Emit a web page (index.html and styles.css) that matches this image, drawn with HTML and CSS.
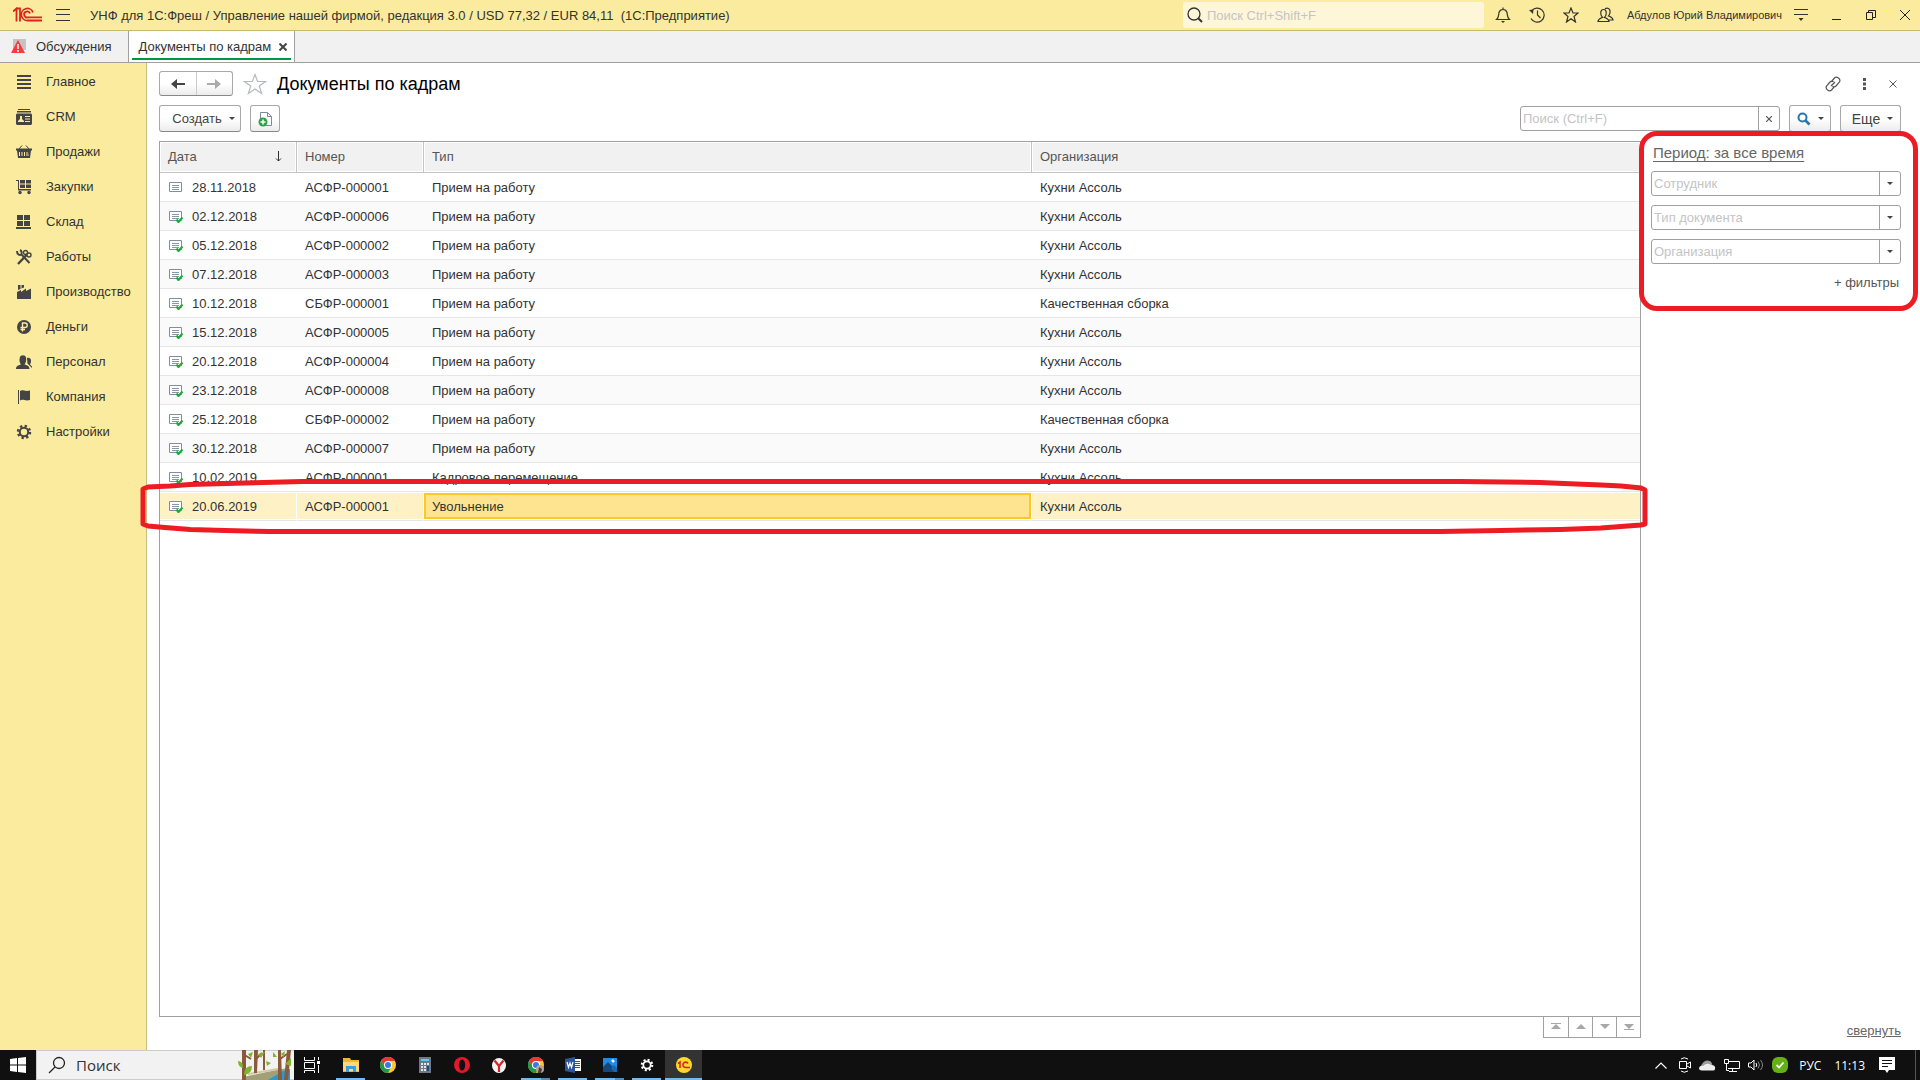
FILE: index.html
```html
<!DOCTYPE html>
<html lang="ru">
<head>
    <meta charset="UTF-8">
    <meta name="viewport" content="width=device-width, initial-scale=1.0">
    <title>Документы по кадрам</title>
    <link rel="stylesheet" href="styles.css">
</head>
<body>
    <header class="titlebar">
        <svg class="logo" viewBox="0 0 30 16" width="30" height="16" fill="none" stroke="#d9261c">
            <path d="M0 4.500L3.500 1.500V14.500M4 1.500H7V14.500" stroke-width="1.800"/>
            <path d="M20 5.500A6 6 0 1 0 15 13.500H29" stroke-width="1.800"/>
            <path d="M17 6.500A3 3 0 1 0 15 10.300H29" stroke-width="1.800"/>
        </svg>
        <button class="icon-btn menu-btn" aria-label="Меню">
            <svg width="14" height="12" viewBox="0 0 14 12" stroke="#333"><path d="M0 .5H14M0 5.500H14M0 11.500H14"/></svg>
        </button>
        <span class="app-title">УНФ для 1С:Фреш / Управление нашей фирмой, редакция 3.0 / USD 77,32 / EUR 84,11&nbsp; (1С:Предприятие)</span>
        <label class="global-search">
            <svg width="16" height="16" viewBox="0 0 16 16" fill="none" stroke="#333"><circle cx="7" cy="7" r="6" stroke-width="1.300"/><path d="M11.500 11.500L15 15" stroke-width="2"/></svg>
            <input type="text" placeholder="Поиск Ctrl+Shift+F" aria-label="Поиск">
        </label>
        <div class="title-icons">
            <button class="icon-btn" aria-label="Уведомления">
                <svg width="16" height="16" viewBox="0 0 16 16" fill="none" stroke="#333" stroke-width="1.200"><path d="M1.500 12.500C4 10.500 3.500 8 4 5.500C4.500 3.500 6 2.500 8 2.500S11.500 3.500 12 5.500C12.500 8 12 10.500 14.500 12.500ZM8 .5V2.500"/><path d="M6 14H10L8 16Z" fill="#333" stroke="none"/></svg>
            </button>
            <button class="icon-btn" aria-label="История">
                <svg width="16" height="16" viewBox="0 0 16 16" fill="none" stroke="#333" stroke-width="1.200"><path d="M2.500 4A7 7 0 1 1 2 11.500M8.500 3.500V8L11.500 11"/><path d="M0 3L4.500 2.500L4 7Z" fill="#333" stroke="none"/></svg>
            </button>
            <button class="icon-btn" aria-label="Избранное">
                <svg width="16" height="16" viewBox="0 0 16 16" fill="none" stroke="#333" stroke-width="1.200"><path d="M8 1L10 6H15L11 9.500L12.500 15L8 11.800L3.500 15L5 9.500L1 6H6Z"/></svg>
            </button>
            <button class="icon-btn" aria-label="Пользователь">
                <svg width="17" height="16" viewBox="0 0 17 16" fill="none" stroke="#333" stroke-width="1.200"><path d="M1 14.500C1 12 3 11.500 5.500 10.500C2.500 7 3.500 2.500 6.500 2.500S10.500 7 7.500 10.500C10 11.500 12 12 12 14.500Z"/><path d="M8 2C10 0 13.500 1.500 13 5C13 7 12.500 8 11.500 9C14 10 16 10.500 16 13H12"/></svg>
            </button>
        </div>
        <a class="user-name" href="#">Абдулов Юрий Владимирович</a>
        <div class="window-icons">
            <button class="icon-btn" aria-label="Параметры">
                <svg width="14" height="14" viewBox="0 0 14 14" stroke="#333"><path d="M0 1.500H14M0 6.500H14"/><path d="M4.500 10H9.500L7 13Z" fill="#333" stroke="none"/></svg>
            </button>
            <button class="icon-btn" aria-label="Свернуть окно">
                <svg width="10" height="10" viewBox="0 0 10 10" stroke="#222"><path d="M0 9.500H9"/></svg>
            </button>
            <button class="icon-btn" aria-label="Восстановить">
                <svg width="10" height="10" viewBox="0 0 10 10" fill="none" stroke="#222"><path d="M.5 2.500H6.500V9.500H.5ZM2.500 2.500V.5H9.500V7.500H6.500"/></svg>
            </button>
            <button class="icon-btn" aria-label="Закрыть окно">
                <svg width="10" height="10" viewBox="0 0 10 10" stroke="#222"><path d="M0 0L10 10M10 0L0 10"/></svg>
            </button>
        </div>
    </header>

    <nav class="tabs">
        <a class="tab" href="#">
            <svg width="17" height="16" viewBox="0 0 17 16"><path d="M3 0H16V11H12L10 15V11H3Z" fill="#c4c4c4"/><path d="M8 1L15 14H1Z" fill="#fb3b3b"/><path d="M8 5V10M8 11V13" stroke="#fff" stroke-width="1.500"/></svg>
            <span>Обсуждения</span>
        </a>
        <div class="tab active">
            <span>Документы по кадрам</span>
            <button class="icon-btn" aria-label="Закрыть вкладку">
                <svg width="8" height="8" viewBox="0 0 8 8" stroke="#444" stroke-width="2"><path d="M.5 .5L7.500 7.500M7.500 .5L.5 7.500"/></svg>
            </button>
        </div>
    </nav>

    <div class="workspace">
        <nav class="sidebar">
            <a href="#"><svg viewBox="0 0 16 16"><path d="M1 1H15V3H1ZM1 5H15V7H1ZM1 9H15V11H1ZM1 13H15V15H1Z"/></svg>Главное</a>
            <a href="#"><svg viewBox="0 0 16 16"><path d="M2 0H14V1H2ZM1 2H15V3.500H1Z"/><path fill-rule="evenodd" d="M1 4.500H15L16 5.500V15L15 16H1L0 15V5.500ZM4 7V10L2 12V13H8V12L6 10V7ZM9 7V8H14V7ZM9 9.500V10.500H14V9.500ZM9 12V13H14V12Z"/></svg>CRM</a>
            <a href="#"><svg viewBox="0 0 16 16"><path d="M3 5L6 1.500M13 5L10 1.500" stroke="#444"/><path fill-rule="evenodd" d="M0 4.500H16V6.500H15L14 14H2L1 6.500H0ZM3 8V12H4V8ZM5.500 8V12H6.500V8ZM8 8V12H9V8ZM10.500 8V12H11.500V8ZM13 8L12.500 12H13Z"/></svg>Продажи</a>
            <a href="#"><svg viewBox="0 0 16 16"><path d="M0 1H3V10H15V11.500H2V2H0ZM4 1H9V4.500H4ZM10 1H15V4.500H10ZM4 5.500H9V9H4ZM10 5.500H15V9H10Z"/><circle cx="4" cy="13.500" r="1.700"/><circle cx="13" cy="13.500" r="1.700"/></svg>Закупки</a>
            <a href="#"><svg viewBox="0 0 16 16"><path d="M1 1H7V6H1ZM8 1H14V6H8ZM1 7H7V12H1ZM8 7H14V12H8ZM0 13H15V15H0Z"/></svg>Склад</a>
            <a href="#"><svg viewBox="0 0 16 16" fill="none" stroke="#444"><path d="M1 2C1 6 4 6.500 5.500 5.500L13.500 14M4 1C6 2 6 4 5 5" stroke-width="2"/><path d="M2 15L10.500 6" stroke-width="2.400"/><circle cx="9.500" cy="3.500" r="2" stroke-width="1.400"/><circle cx="13" cy="6" r="2" stroke-width="1.400"/></svg>Работы</a>
            <a href="#"><svg viewBox="0 0 16 16"><path d="M1 15V8L5 6V8L10 4.500V7L15 4.500V15ZM2 1H4.500V5L2 6ZM5.500 1H8V3.500L5.500 4.500Z"/></svg>Производство</a>
            <a href="#"><svg viewBox="0 0 16 16"><circle cx="8" cy="8" r="7"/><path d="M6.500 12.500V4H9C12 4 12 8.500 9 8.500H4.500M4.500 10.500H9" fill="none" stroke="#fbeb9e" stroke-width="1.400"/></svg>Деньги</a>
            <a href="#"><svg viewBox="0 0 16 16"><path d="M0 15C0 12 2 11.500 5 10.500C3 8 3.500 5 3.800 3.500C4.500 .5 9.500 .5 10 3.500C10.500 6 10 8.500 8.500 10.500C11.500 11.500 13.500 12 13.500 15ZM11 4C13 3 15.500 4.500 15 7C15 8.500 14.500 9.500 14 10.500L16 12.500V14L11.500 9.500Z"/></svg>Персонал</a>
            <a href="#"><svg viewBox="0 0 16 16"><path d="M2 1H3V15H2ZM4 2C7 0 8 3 14 1.500V11C9 12.500 7 9.500 4 11.500Z"/></svg>Компания</a>
            <a href="#"><svg viewBox="0 0 16 16" fill="none" stroke="#444"><circle cx="8" cy="8" r="4.200" stroke-width="2"/><circle cx="8" cy="8" r="6" stroke-width="2.400" stroke-dasharray="2.350 2.350"/></svg>Настройки</a>
        </nav>

        <main class="content">
            <div class="form-head">
                <div class="history">
                    <button aria-label="Назад"><svg width="15" height="10" viewBox="0 0 15 10" fill="#444"><path d="M0 5L6 0V4H14V6H6V10Z"/></svg></button>
                    <button aria-label="Вперед"><svg width="15" height="10" viewBox="0 0 15 10" fill="#aaa"><path d="M14 5L8 0V4H0V6H8V10Z"/></svg></button>
                </div>
                <button class="icon-btn" aria-label="В избранное">
                    <svg width="24" height="22" viewBox="0 0 24 22" fill="none" stroke="#b4bac0" stroke-width="1.200"><path d="M12 1.500L14.600 8.500H22.500L16.300 13L18.600 20.500L12 16L5.400 20.500L7.700 13L1.500 8.500H9.400Z"/></svg>
                </button>
                <h1>Документы по кадрам</h1>
                <div class="form-tools">
                    <button class="icon-btn" aria-label="Ссылка">
                        <svg width="16" height="16" viewBox="0 0 16 16" fill="none" stroke="#555" stroke-width="1.200"><path d="M6.500 5.500L9.500 2C11.500 -.2 16.500 3 14.300 6.200L11 10C10 11 8.500 11 7.500 10.200M9.500 10.500L6.500 14C4.500 16.200 -.5 13 1.700 9.800L5 6C6 5 7.500 5 8.500 5.800M6 10L10 6"/></svg>
                    </button>
                    <button class="icon-btn" aria-label="Дополнительно">
                        <svg width="8" height="12" viewBox="0 0 8 12" fill="#555"><path d="M2 0H5V3H2ZM2 4.500H5V7.500H2ZM2 9H5V12H2Z"/></svg>
                    </button>
                    <button class="icon-btn" aria-label="Закрыть">
                        <svg width="8" height="8" viewBox="0 0 8 8" stroke="#555"><path d="M.5 .5L7.500 7.500M7.500 .5L.5 7.500"/></svg>
                    </button>
                </div>
            </div>

            <div class="toolbar">
                <button class="btn create">Создать <i class="caret"></i></button>
                <button class="btn copy" aria-label="Создать копированием">
                    <svg width="15" height="16" viewBox="0 0 15 16"><path d="M2.500 8V1.500H9.500L13.500 5.500V14.500H8" fill="#fff" stroke="#7a8b9e"/><path d="M9.500 1.500V5.500H13.500" fill="none" stroke="#7a8b9e"/><circle cx="5" cy="11" r="4.500" fill="#2aa346"/><path d="M5 8.500V13.500M2.500 11H7.500" stroke="#fff" stroke-width="1.500"/></svg>
                </button>
                <div class="field search-field">
                    <input type="text" placeholder="Поиск (Ctrl+F)" aria-label="Поиск в списке">
                    <button aria-label="Очистить"><svg width="6" height="6" viewBox="0 0 6 6" stroke="#555" stroke-width="1.200"><path d="M0 0L6 6M6 0L0 6"/></svg></button>
                </div>
                <button class="btn find" aria-label="Найти">
                    <svg width="14" height="14" viewBox="0 0 14 14" fill="none" stroke="#2b76b0"><circle cx="5.500" cy="5.500" r="4" stroke-width="2"/><path d="M8.500 8.500L12.500 12.500" stroke-width="2.600"/></svg>
                    <i class="caret"></i>
                </button>
                <button class="btn more">Еще <i class="caret"></i></button>
            </div>

            <div class="body">
                <section class="list">
                    <div class="grid">
                        <table>
                            <colgroup>
                                <col class="col-date">
                                <col class="col-number">
                                <col class="col-type">
                                <col>
                            </colgroup>
                            <thead>
                                <tr>
                                    <th><span class="sorted">Дата <svg width="7" height="11" viewBox="0 0 7 11" fill="none" stroke="#333"><path d="M3.500 0V10M1 7.500L3.500 10L6 7.500"/></svg></span></th>
                                    <th>Номер</th>
                                    <th>Тип</th>
                                    <th>Организация</th>
                                </tr>
                            </thead>
                            <tbody id="rows"></tbody>
                        </table>
                    </div>
                    <div class="pager">
                        <button aria-label="В начало"><svg width="10" height="8" viewBox="0 0 10 8"><path d="M0 0H10V1H0ZM5 1L10 6H0Z"/></svg></button>
                        <button aria-label="Вверх"><svg width="10" height="8" viewBox="0 0 10 8"><path d="M5 1L10 6H0Z"/></svg></button>
                        <button aria-label="Вниз"><svg width="10" height="8" viewBox="0 0 10 8"><path d="M5 6L10 1H0Z"/></svg></button>
                        <button aria-label="В конец"><svg width="10" height="8" viewBox="0 0 10 8"><path d="M5 6L10 1H0ZM0 6H10V7H0Z"/></svg></button>
                    </div>
                    <svg class="row-mark" viewBox="0 0 1508 56" preserveAspectRatio="none">
                        <path vector-effect="non-scaling-stroke" d="M4 10L9 8L31 7L51 5.500L106 4L163 2.500H1320L1400 3.500L1436 5L1461 6L1481 7L1501 9L1505 11V45L1501 46L1461 49L1421 50.500L1361 51.500L1301 52.500H131L86 51.500L51 50.500L26 48.500L9 47L4 45Z"/>
                    </svg>
                </section>

                <aside class="filters">
                    <a class="period" href="#">Период: за все время</a>
                    <div class="field">
                        <input type="text" placeholder="Сотрудник" aria-label="Сотрудник">
                        <button aria-label="Выбрать сотрудника"><i class="caret"></i></button>
                    </div>
                    <div class="field">
                        <input type="text" placeholder="Тип документа" aria-label="Тип документа">
                        <button aria-label="Выбрать тип документа"><i class="caret"></i></button>
                    </div>
                    <div class="field">
                        <input type="text" placeholder="Организация" aria-label="Организация">
                        <button aria-label="Выбрать организацию"><i class="caret"></i></button>
                    </div>
                    <a class="add-filter" href="#">+ фильтры</a>
                    <a class="collapse" href="#">свернуть</a>
                    <div class="mark"></div>
                </aside>
            </div>
        </main>
    </div>

    <footer class="taskbar">
        <button class="start" aria-label="Пуск"><svg width="16" height="16" viewBox="0 0 16 16" fill="#fff"><path d="M0 2L7 1V7.500H0ZM8 1L16 0V7.500H8ZM0 8.500H7V15L0 14ZM8 8.500H16V16L8 15Z"/></svg></button>
        <label class="task-search">
            <svg width="18" height="18" viewBox="0 0 18 18" fill="none" stroke="#222" stroke-width="1.300"><circle cx="11" cy="7" r="5.500"/><path d="M7 11L1 17"/></svg>
            <input type="text" placeholder="Поиск" aria-label="Поиск Windows">
            <svg class="forest" width="56" height="30" viewBox="0 0 56 30">
                <path d="M26 30L42 21L52 19V30Z" fill="#279bd0"/>
                <path d="M5 27L38 20L50 18L30 30H5Z" fill="#a3a078"/>
                <path d="M10 24L40 19" stroke="#d0c9a5" stroke-width="2"/>
                <path d="M4 0H8V30H4ZM16 0H20L19 23H16ZM25 0H27V20H25ZM40 0H43L44 30H40ZM49 0H53L50 30H46Z" fill="#8a5a3b"/>
                <path d="M18 9L24 3M5 4L13 9M42 9L49 4" stroke="#8a5a3b" stroke-width="2"/>
                <path d="M0 11Q5 11 5 18Q0 17 0 11ZM6 25Q6 16 14 16Q14 24 6 25ZM10 4L15 2L13 8ZM20 4L27 2L23 8ZM28 11L33 13L29 16ZM35 2L39 7L35 7ZM47 14L53 8V16ZM43 4L47 1L46 7Z" fill="#7fb52b"/>
            </svg>
        </label>
        <div class="apps">
            <button class="app task-view" aria-label="Представление задач"><svg width="16" height="16" viewBox="0 0 16 16" fill="none" stroke="#fff"><path d="M.5 0V3.500H10.500V0M.5 5.500H10.500V11.500H.5ZM.5 16V13.500H10.500V16M14.500 0V3M14.500 8V16"/><path d="M13 4H16V7H13Z" fill="#fff" stroke="none"/></svg></button>
            <button class="app open" aria-label="Проводник"><svg width="16" height="14" viewBox="0 0 16 14"><path d="M0 0H7L8 2H16V14H0Z" fill="#f2b52e"/><path d="M0 4H16V13H0Z" fill="#ffd977"/><path d="M3 14V8H13V14H10V11H6V14Z" fill="#3f9be0"/></svg></button>
            <button class="app" aria-label="Chrome"><svg width="16" height="16" viewBox="0 0 16 16"><circle cx="8" cy="8" r="8" fill="#fcc934"/><path d="M1 4A8 8 0 0 1 15 4H8L5 9.500Z" fill="#e33b2e"/><path d="M1 4A8 8 0 0 0 8 16L11 10L5 9.500Z" fill="#23984c"/><circle cx="8" cy="8" r="4" fill="#fff"/><circle cx="8" cy="8" r="3" fill="#3579e6"/></svg></button>
            <button class="app" aria-label="Калькулятор"><svg width="12" height="16" viewBox="0 0 12 16"><path d="M0 0H12V16H0Z" fill="#6d7a85"/><path d="M2 2H10V4H2Z" fill="#58d0f5"/><path d="M2 6H4V8H2ZM5 6H7V8H5ZM8 6H10V8H8ZM2 9H4V11H2ZM5 9H7V11H5ZM2 12H4V14H2ZM5 12H7V14H5Z" fill="#e4e8ea"/><path d="M8 9H10V14H8Z" fill="#154a86"/></svg></button>
            <button class="app" aria-label="Opera"><svg width="16" height="16" viewBox="0 0 16 16"><circle cx="8" cy="8" r="8" fill="#e0192b"/><ellipse cx="8" cy="8" rx="3.200" ry="5.500" fill="#101010"/></svg></button>
            <button class="app" aria-label="Яндекс"><svg width="14" height="15" viewBox="0 0 14 15"><ellipse cx="7" cy="7.500" rx="7" ry="7.500" fill="#f4f4f4"/><path d="M2.500 2.500L7 8L11.500 2.500M7 7.500V14" fill="none" stroke="#e02020" stroke-width="2.200"/></svg></button>
            <button class="app open multi" aria-label="Chrome, профиль"><svg width="16" height="16" viewBox="0 0 16 16"><circle cx="8" cy="8" r="8" fill="#fcc934"/><path d="M1 4A8 8 0 0 1 15 4H8L5 9.500Z" fill="#e33b2e"/><path d="M1 4A8 8 0 0 0 8 16L11 10L5 9.500Z" fill="#23984c"/><circle cx="8" cy="8" r="4" fill="#fff"/><circle cx="8" cy="8" r="3" fill="#3579e6"/><circle cx="12" cy="12" r="4" fill="#b8a69a"/><path d="M11 10L14 12L13 16H10Z" fill="#54382c"/></svg></button>
            <button class="app open" aria-label="Word"><svg width="16" height="16" viewBox="0 0 16 16"><path d="M9 2H16V14H9Z" fill="#fff"/><path d="M10 4.500H15M10 6.500H15M10 8.500H15M10 10.500H15" stroke="#2b579a"/><path d="M0 2L10 0V16L0 14Z" fill="#2b579a"/><path d="M2 5L3.500 10.500L5 6L6.500 10.500L8 5" fill="none" stroke="#fff" stroke-width="1.200"/></svg></button>
            <button class="app open multi" aria-label="Фотографии"><svg width="14" height="14" viewBox="0 0 14 14"><path d="M0 0H14V14H0Z" fill="#1f8ce6"/><path d="M0 9L5 4L14 13V14H0Z" fill="#14477e"/><path d="M8 10L11 7L14 10V14H11Z" fill="#1a66b0"/><path d="M10 1L11 2.500L12 3L11 4L10 5L9 3.500L8 3L9 2Z" fill="#fff"/></svg></button>
            <button class="app open" aria-label="Параметры"><svg width="14" height="14" viewBox="0 0 16 16" fill="none" stroke="#fff"><circle cx="8" cy="8" r="4.200" stroke-width="2"/><circle cx="8" cy="8" r="6" stroke-width="2.400" stroke-dasharray="2.350 2.350"/></svg></button>
            <button class="app open current" aria-label="1С"><svg width="16" height="16" viewBox="0 0 16 16" fill="none"><circle cx="8" cy="8" r="8" fill="#fbd92e"/><path d="M2 6.500L4 5V11M12 6.500A2.700 2.700 0 1 0 9.500 10.500H14" stroke="#d9261c" stroke-width="1.600"/></svg></button>
        </div>
        <div class="tray">
            <svg class="expand" width="12" height="7" viewBox="0 0 12 7" fill="none" stroke="#fff" stroke-width="1.200"><path d="M.5 6.500L6 1L11.500 6.500"/></svg>
            <svg width="12" height="16" viewBox="0 0 12 16" fill="none" stroke="#fff"><path d="M.5 4.500H7.500V11.500H.5ZM8 7L11.500 5V11L8 9M2 2Q5 -.5 9 2M2 14Q5 16.500 9 14"/></svg>
            <svg width="17" height="11" viewBox="0 0 17 11"><path d="M4 10A4 4 0 0 1 3 4Q6 -1 11 1Q14 3 13 6Z" fill="#9c9c9c"/><path d="M3 10.500Q0 10.500 0 8Q1 5 4 6Q8 2 12 5Q17 5 16 9Q16 10.500 14 10.500Z" fill="#eee"/></svg>
            <svg width="16" height="13" viewBox="0 0 16 13" fill="none" stroke="#fff"><path d="M4 2.500H15.500V9.500H4M8.500 9.500V12M5 12.500H13M.5 .5H4.500V4.500H.5ZM2.500 5V11.500H5"/></svg>
            <svg width="16" height="12" viewBox="0 0 16 12" fill="none" stroke="#fff"><path d="M.5 4V8H3L6 11V1L3 4ZM8 4Q9.500 6 8 8"/><path d="M10 2.500Q13 6 10 9.500M12.500 1Q16.500 6 12.500 11" stroke="#888"/></svg>
            <svg width="16" height="16" viewBox="0 0 16 16"><rect width="16" height="16" rx="6" fill="#65b015"/><path d="M4.500 8L7 10.500L11.500 5.500" fill="none" stroke="#fff" stroke-width="1.800"/></svg>
            <span class="lang">РУС</span>
            <time>11:13</time>
            <svg width="16" height="16" viewBox="0 0 16 16"><path d="M0 0H16V13H10L8 16L6 13H0Z" fill="#fff"/><path d="M3 3.500H13M3 6.500H13M3 9.500H9" stroke="#101010"/></svg>
        </div>
    </footer>

    <script src="rows.js"></script>
</body>
</html>
```
FILE: styles.css
```css
* {
    margin: 0;
    padding: 0;
    box-sizing: border-box;
}

body {
    display: flex;
    flex-direction: column;
    height: 100vh;
    overflow: hidden;
    background: #fff;
    color: #333;
    font-family: "Liberation Sans", Arial, sans-serif;
    font-size: 13px;
}

button,
input {
    font: inherit;
    color: inherit;
}

button {
    cursor: pointer;
}

a {
    color: inherit;
    text-decoration: none;
}

input {
    min-width: 0;
    border: none;
    outline: none;
    background: none;
}

input::placeholder {
    color: #c4c4c4;
    opacity: 1;
}

svg {
    display: block;
    flex: none;
}

.icon-btn {
    display: flex;
    border: none;
    background: none;
}

/* Title bar */
.titlebar {
    display: flex;
    align-items: center;
    flex: none;
    height: 31px;
    padding: 0 10px 0 13px;
    background: #fbeb9e;
    border-bottom: 1px solid #c9b96a;
}

.menu-btn {
    margin: 0 20px 0 13px;
}

.global-search {
    display: flex;
    align-items: center;
    gap: 4px;
    width: 301px;
    height: 26px;
    margin-left: auto;
    padding: 0 4px;
    background: #fef6d8;
    border-radius: 3px;
}

.global-search input {
    flex: 1;
}

.title-icons {
    display: flex;
    gap: 18px;
    margin: 0 13px 0 11px;
}

.user-name {
    font-size: 11px;
}

.window-icons {
    display: flex;
    align-items: center;
    gap: 24px;
    margin-left: 12px;
}

/* Open windows */
.tabs {
    display: flex;
    flex: none;
    height: 32px;
    background: #f1f1f1;
    border-bottom: 1px solid #a0a0a0;
}

.tab {
    display: flex;
    align-items: center;
    gap: 9px;
    padding: 0 16px 0 10px;
    border-right: 1px solid #a0a0a0;
}

.tab.active {
    position: relative;
    gap: 8px;
    padding: 0 7px 0 10px;
    background: #fff;
}

.tab.active::after {
    content: "";
    position: absolute;
    left: 3px;
    right: 3px;
    bottom: 2px;
    height: 2px;
    background: #009646;
}

.workspace {
    display: flex;
    flex: 1;
    min-height: 0;
}

/* Sections */
.sidebar {
    flex: none;
    width: 147px;
    padding-top: 1px;
    background: #fbeb9e;
    border-right: 1px solid #c9bd7e;
}

.sidebar a {
    display: flex;
    align-items: center;
    gap: 14px;
    height: 35px;
    padding-left: 16px;
}

.sidebar svg {
    width: 16px;
    height: 16px;
    fill: #444;
}

.sidebar svg[fill="none"] {
    fill: none;
}

/* Form */
.content {
    display: flex;
    flex-direction: column;
    flex: 1;
    min-width: 0;
    padding: 8px 19px 12px 12px;
}

.form-head {
    display: flex;
    align-items: center;
    gap: 10px;
    height: 25px;
}

.history {
    display: flex;
    border: 1px solid #a8a8a8;
    border-bottom-color: #888;
    border-radius: 3px;
    background: linear-gradient(#fff 50%, #ececec);
}

.history button {
    display: flex;
    align-items: center;
    justify-content: center;
    width: 36px;
    height: 23px;
    border: none;
    background: none;
}

.history button + button {
    border-left: 1px solid #ccc;
}

h1 {
    color: #000;
    font-size: 18px;
    font-weight: normal;
    line-height: 22px;
}

.form-tools {
    display: flex;
    align-items: center;
    gap: 20px;
    margin-left: auto;
    padding-right: 4px;
}

.toolbar {
    display: flex;
    gap: 9px;
    height: 27px;
    margin: 9px 0;
}

.btn {
    display: flex;
    align-items: center;
    justify-content: center;
    gap: 7px;
    border: 1px solid #a8a8a8;
    border-bottom-color: #888;
    border-radius: 3px;
    background: linear-gradient(#fff 50%, #ececec);
    color: #444;
}

.caret {
    width: 0;
    border: 3px solid transparent;
    border-top-color: #444;
    border-bottom: none;
}

.create {
    width: 82px;
    padding-left: 7px;
}

.copy {
    width: 30px;
}

.find {
    width: 42px;
}

.more {
    width: 61px;
    padding-left: 4px;
    font-size: 14px;
}

.field {
    display: flex;
    height: 25px;
    border: 1px solid #a0a0a0;
    border-radius: 3px;
}

.field input {
    flex: 1;
    padding: 0 2px;
}

.field button {
    display: flex;
    align-items: center;
    justify-content: center;
    width: 21px;
    border: none;
    border-left: 1px solid #a0a0a0;
    background: none;
}

.search-field {
    width: 260px;
    margin-left: auto;
    margin-top: 1px;
}

.body {
    display: flex;
    flex: 1;
    gap: 10px;
    min-height: 0;
}

/* Documents */
.list {
    position: relative;
    display: flex;
    flex-direction: column;
    flex: 1;
    min-width: 0;
}

.grid {
    flex: 1;
    border: 1px solid #a0a0a0;
}

table {
    width: 100%;
    table-layout: fixed;
    border-collapse: separate;
    border-spacing: 0;
}

.col-date {
    width: 137px;
}

.col-number {
    width: 127px;
}

.col-type {
    width: 608px;
}

th {
    height: 31px;
    padding: 0 8px 2px;
    background: #f1f1f1;
    border-right: 1px solid #c4c4c4;
    border-bottom: 1px solid #c4c4c4;
    box-shadow: inset 0 0 0 1px #fff;
    color: #555;
    font-weight: normal;
    text-align: left;
}

th:last-child {
    border-right: none;
}

.sorted {
    display: flex;
    align-items: center;
    justify-content: space-between;
    padding-right: 6px;
}

td {
    height: 29px;
    padding: 0 8px;
    border-bottom: 1px solid #e6e6e6;
}

tr:nth-child(even) td {
    background: #fafafa;
}

.date {
    display: flex;
    align-items: center;
    gap: 8px;
}

tr.selected td {
    background: #fdf1c5;
    border-right: 1px solid #fff;
    box-shadow: inset 0 1px #fff, inset 0 -1px #fff;
}

tr.selected td:last-child {
    border-right: none;
}

tr.selected td.current {
    background: #fee491;
    box-shadow: inset 0 1px #fff, inset 0 -1px #fff,
        inset 2px 0 #fbc926, inset -2px 0 #fbc926,
        inset 0 3px #fbc926, inset 0 -3px #fbc926;
}

.pager {
    display: flex;
    align-self: flex-end;
    height: 21px;
    border: 1px solid #a0a0a0;
    border-top: none;
}

.pager button {
    display: flex;
    align-items: center;
    justify-content: center;
    width: 24px;
    border: none;
    background: none;
}

.pager button + button {
    border-left: 1px solid #a0a0a0;
}

.pager svg {
    fill: #a8a8a8;
}

/* Filters */
.filters {
    position: relative;
    display: flex;
    flex-direction: column;
    gap: 9px;
    width: 250px;
}

.period {
    align-self: flex-start;
    margin: 2px 0 0 2px;
    color: #666;
    font-size: 15px;
    line-height: 19px;
    text-decoration: underline;
    text-underline-offset: 3px;
}

.add-filter {
    align-self: flex-end;
    margin-right: 2px;
    color: #555;
    line-height: 20px;
}

.collapse {
    align-self: flex-end;
    margin-top: auto;
    color: #666;
    text-decoration: underline;
}

/* Red pencil marks drawn over the form */
.mark {
    position: absolute;
    top: -10px;
    left: -12px;
    right: -17px;
    height: 180px;
    border: 5px solid #ed1c24;
    border-radius: 18px;
    pointer-events: none;
}

.row-mark {
    position: absolute;
    top: 338px;
    left: -20px;
    width: calc(100% + 27px);
    height: 56px;
    fill: none;
    stroke: #ed1c24;
    stroke-width: 5px;
    stroke-linejoin: round;
    pointer-events: none;
}

/* Windows taskbar */
.taskbar {
    display: flex;
    flex: none;
    height: 30px;
    background: #101010;
    color: #fff;
    font-family: "Open Sans", "Noto Sans", sans-serif;
}

.start {
    display: flex;
    align-items: center;
    justify-content: center;
    width: 36px;
    border: none;
    background: none;
}

.task-search {
    display: flex;
    align-items: center;
    gap: 10px;
    width: 258px;
    padding-left: 11px;
    background: #f2f2f2;
    border: 1px solid #ccc;
    border-right: none;
}

.task-search input {
    flex: 1;
    font-size: 15px;
}

.task-search input::placeholder {
    color: #333;
}

.apps {
    display: flex;
}

.app {
    position: relative;
    display: flex;
    align-items: center;
    justify-content: center;
    width: 37px;
    border: none;
    background: none;
}

.app.task-view {
    width: 38px;
    padding-right: 2px;
}

.app.open::after {
    content: "";
    position: absolute;
    left: 4px;
    right: 4px;
    bottom: 0;
    height: 2px;
    background: #76b9ed;
}

.app.multi::after {
    background: linear-gradient(90deg, #76b9ed 70%, #5a8bb3 70%);
}

.app.current {
    background: #333;
}

.app.current::after {
    left: 0;
    right: 0;
}

.tray {
    display: flex;
    align-items: center;
    gap: 8px;
    margin-left: auto;
    margin-right: 4px;
    padding-right: 20px;
    border-right: 1px solid #555;
    font-size: 12px;
}

.tray .expand {
    margin-right: 4px;
}

.tray .lang {
    margin: 0 5px 0 3px;
}

.tray time {
    margin-right: 6px;
}
```
FILE: rows.js
```javascript
const documents = [
    ['28.11.2018', 'АСФР-000001', 'Прием на работу', 'Кухни Ассоль'],
    ['02.12.2018', 'АСФР-000006', 'Прием на работу', 'Кухни Ассоль'],
    ['05.12.2018', 'АСФР-000002', 'Прием на работу', 'Кухни Ассоль'],
    ['07.12.2018', 'АСФР-000003', 'Прием на работу', 'Кухни Ассоль'],
    ['10.12.2018', 'СБФР-000001', 'Прием на работу', 'Качественная сборка'],
    ['15.12.2018', 'АСФР-000005', 'Прием на работу', 'Кухни Ассоль'],
    ['20.12.2018', 'АСФР-000004', 'Прием на работу', 'Кухни Ассоль'],
    ['23.12.2018', 'АСФР-000008', 'Прием на работу', 'Кухни Ассоль'],
    ['25.12.2018', 'СБФР-000002', 'Прием на работу', 'Качественная сборка'],
    ['30.12.2018', 'АСФР-000007', 'Прием на работу', 'Кухни Ассоль'],
    ['10.02.2019', 'АСФР-000001', 'Кадровое перемещение', 'Кухни Ассоль'],
    ['20.06.2019', 'АСФР-000001', 'Увольнение', 'Кухни Ассоль']
];

const check = '<path d="M8.500 10.500L10.500 13L14.500 8.500" stroke="#22a83a" stroke-width="2.200"/>';

document.getElementById('rows').innerHTML = documents.map(([date, number, type, org], i) => {
    const last = i === documents.length - 1;
    // the first document is not posted, so it has no green check
    const icon = `<svg width="16" height="14" viewBox="0 0 16 14" fill="none">
        <path d="M1.500 2.500H13.500V11.500H1.500Z" fill="#fff" stroke="#7f8fa3"/>
        <path d="M4 5.500H11M4 7.500H11M4 9.500H11" stroke="#8998a9"/>${i ? check : ''}</svg>`;
    return `<tr class="${last ? 'selected' : ''}">
        <td><span class="date">${icon}${date}</span></td>
        <td>${number}</td>
        <td class="${last ? 'current' : ''}">${type}</td>
        <td>${org}</td>
    </tr>`;
}).join('');
```
